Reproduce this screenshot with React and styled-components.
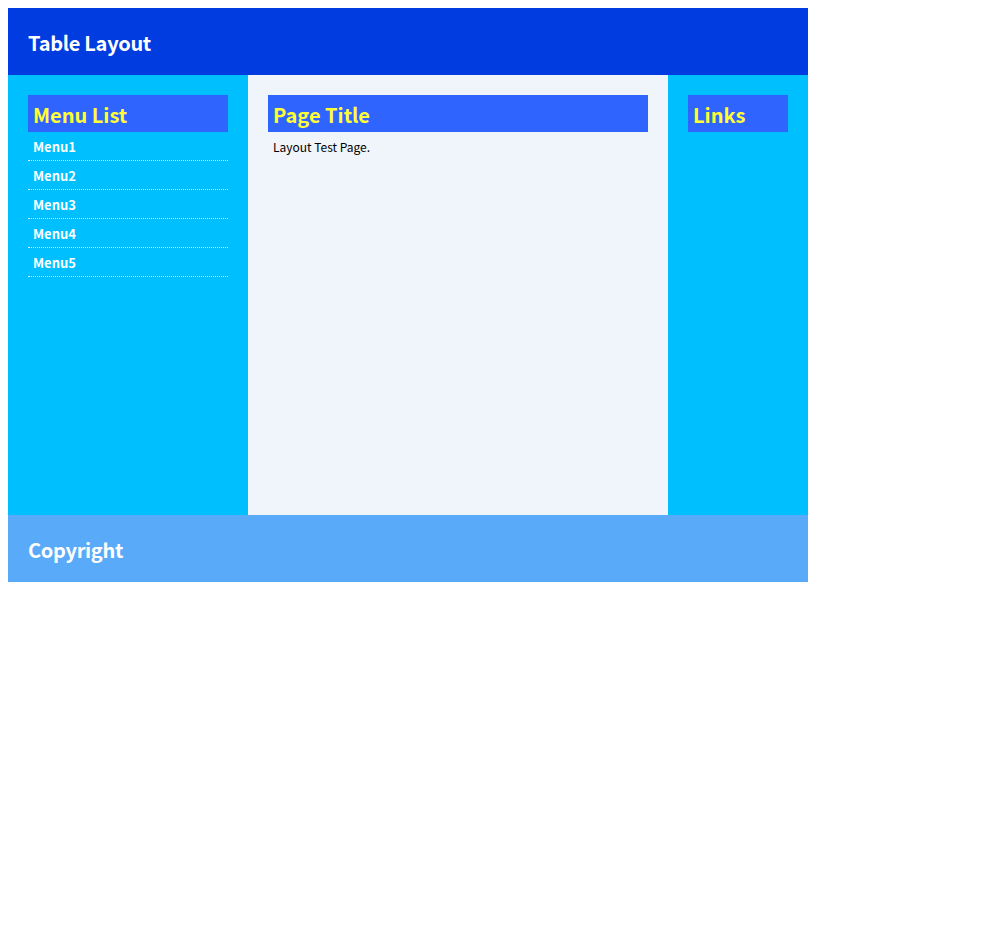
import React from "react";
import styled, { createGlobalStyle } from "styled-components";

const Global = createGlobalStyle`
  body {
    margin: 8px;
    background: #ffffff;
    font-family: "Noto Sans CJK KR", "Noto Sans", sans-serif;
  }
`;

const Layout = styled.div`
  width: 800px;
  display: grid;
  grid-template-columns: 240px 420px 140px;
  grid-template-rows: 67px 440px 67px;
`;

const Bar = styled.div`
  grid-column: 1 / -1;
  background: ${(p) => p.$bg};
  color: #ffffff;
  padding: 21px 20px 19px;
  font-size: 20px;
  font-weight: 700;
  line-height: 27px;
  letter-spacing: -0.3px;
`;

const Column = styled.div`
  background: ${(p) => p.$bg};
  padding: 20px;
`;

const Heading = styled.h2`
  margin: 0;
  background: #3064ff;
  color: #ffff33;
  font-size: 20px;
  font-weight: 700;
  line-height: 27px;
  padding: 6px 5px 4px;
`;

const MenuList = styled.ul`
  list-style: none;
  margin: 0;
  padding: 0;
`;

const MenuItem = styled.li`
  border-bottom: 1px dotted #ffffff;
  padding: 1px 5px 0;
  line-height: 27px;
  font-size: 13px;
  font-weight: 700;
  color: #ffffff;
`;

const Text = styled.p`
  margin: 0;
  padding: 5px;
  font-size: 12px;
  line-height: 20px;
  color: #000000;
`;

export default function App() {
  return (
    <>
      <Global />
      <Layout>
        <Bar $bg="#003ce0">Table Layout</Bar>
        <Column $bg="#00bfff">
          <Heading>Menu List</Heading>
          <MenuList>
            {["Menu1", "Menu2", "Menu3", "Menu4", "Menu5"].map((m) => (
              <MenuItem key={m}>{m}</MenuItem>
            ))}
          </MenuList>
        </Column>
        <Column $bg="#f0f5fb">
          <Heading>Page Title</Heading>
          <Text>Layout Test Page.</Text>
        </Column>
        <Column $bg="#00bfff">
          <Heading>Links</Heading>
        </Column>
        <Bar $bg="#59abfa">Copyright</Bar>
      </Layout>
    </>
  );
}
